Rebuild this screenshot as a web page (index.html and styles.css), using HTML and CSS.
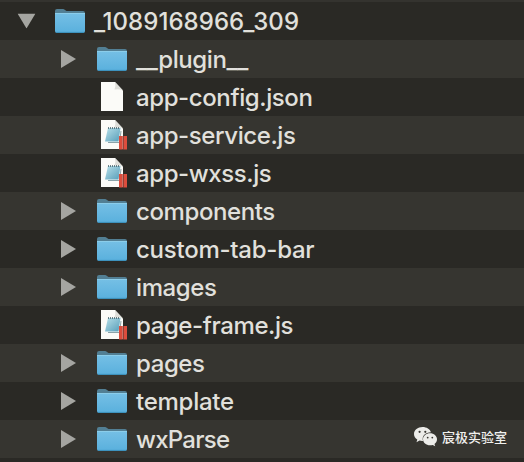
FILE: index.html
```html
<!DOCTYPE html>
<html lang="en">
<head>
<meta charset="utf-8">
<title>_1089168966_309</title>
<link rel="stylesheet" href="styles.css">
</head>
<body>
<svg class="defs" width="0" height="0" aria-hidden="true">
  <defs>
    <linearGradient id="front" x1="0" y1="0" x2="0" y2="1">
      <stop offset="0" stop-color="#75bfe5"/>
      <stop offset="1" stop-color="#59b0dd"/>
    </linearGradient>
    <linearGradient id="pad" x1="0" y1="0" x2="1" y2="1">
      <stop offset="0" stop-color="#b9e0e9"/>
      <stop offset="1" stop-color="#559db9"/>
    </linearGradient>
    <symbol id="folder" viewBox="0 0 30 24">
      <path d="M0 6V2Q0 0 2 0H8Q9 0 10 1L11.5 2H28Q30 2 30 4V6Z" fill="#527f94"/>
      <path d="M0 4.5H30V22Q30 24 28 24H2Q0 24 0 22Z" fill="url(#front)"/>
      <path d="M0 4.5H30" stroke="#8bcdea" stroke-width="1"/>
      <path d="M1 23.4H29" stroke="#3b8eb9" stroke-width="1"/>
    </symbol>
    <symbol id="page" viewBox="0 0 28 30">
      <path d="M0 0H14L22 8.500V29H0Z" fill="#fbfbf8"/>
      <path d="M14 0L22 8.500Q18 6.500 13.500 7.500Q15 4 14 0Z" fill="#deded9"/>
    </symbol>
    <symbol id="script" viewBox="0 0 28 30">
      <use href="#page" width="28" height="30"/>
      <path d="M7 8H19.500L17.500 21.500H4Z" fill="url(#pad)"/>
      <path d="M7 22.500H18.500L20 11" fill="none" stroke="#8ba3a9" stroke-width="1"/>
      <path d="M7 8H19" stroke="#455d65" stroke-width="1.500" stroke-dasharray="1 1"/>
      <path d="M18 16H21.500V29.500H18ZM22.500 16H26V29.500H22.500Z" fill="#dc4d3d"/>
      <path d="M22 16V29.500" stroke="#a5443a" stroke-width="1"/>
    </symbol>
    <symbol id="arrow" viewBox="0 0 15 18">
      <path d="M0 0L15 9L0 18Z" fill="#a5a5a1"/>
    </symbol>
  </defs>
</svg>
<main class="tree">
  <div class="row root"><svg class="arrow open"><use href="#arrow"/></svg><svg class="folder"><use href="#folder"/></svg><span class="name digits">_1089168966_309</span></div>
  <div class="row"><svg class="arrow"><use href="#arrow"/></svg><svg class="folder"><use href="#folder"/></svg><span class="name">__plugin__</span></div>
  <div class="row"><svg class="file"><use href="#page"/></svg><span class="name">app-config.json</span></div>
  <div class="row"><svg class="file"><use href="#script"/></svg><span class="name">app-service.js</span></div>
  <div class="row"><svg class="file"><use href="#script"/></svg><span class="name">app-wxss.js</span></div>
  <div class="row"><svg class="arrow"><use href="#arrow"/></svg><svg class="folder"><use href="#folder"/></svg><span class="name">components</span></div>
  <div class="row"><svg class="arrow"><use href="#arrow"/></svg><svg class="folder"><use href="#folder"/></svg><span class="name loose">custom-tab-bar</span></div>
  <div class="row"><svg class="arrow"><use href="#arrow"/></svg><svg class="folder"><use href="#folder"/></svg><span class="name">images</span></div>
  <div class="row"><svg class="file"><use href="#script"/></svg><span class="name">page-frame.js</span></div>
  <div class="row"><svg class="arrow"><use href="#arrow"/></svg><svg class="folder"><use href="#folder"/></svg><span class="name">pages</span></div>
  <div class="row"><svg class="arrow"><use href="#arrow"/></svg><svg class="folder"><use href="#folder"/></svg><span class="name loose">template</span></div>
  <div class="row"><svg class="arrow"><use href="#arrow"/></svg><svg class="folder"><use href="#folder"/></svg><span class="name tight">wxParse</span></div>
</main>
<div class="watermark">
  <svg class="wechat" viewBox="0 0 23 20">
    <path d="M8.500 0C3.800 0 0 3 0 7C0 9.400 1.300 11.400 3.300 12.600L2.500 15.200L5.500 13.600Q7 14 9 13.900C7.500 9 11.500 5.200 16.900 5.200C16 2.100 12.700 0 8.500 0Z" fill="#ecece9"/>
    <path d="M16 6.200C12.100 6.200 9 8.900 9 12.300S12.100 18.300 16 18.300Q17.500 18.300 18.700 17.900L21.200 19.300L20.500 17C22 15.900 23 14.200 23 12.300C23 8.900 19.900 6.200 16 6.200Z" fill="#ecece9"/>
    <g fill="#383733"><circle cx="5.600" cy="4.800" r="1.100"/><circle cx="11.300" cy="4.800" r="1.100"/><circle cx="13.700" cy="10.600" r=".9"/><circle cx="18.300" cy="10.600" r=".9"/></g>
  </svg>
  <span>宸极实验室</span>
</div>
</body>
</html>
```
FILE: styles.css
```css
body {
  margin: 0;
  width: 524px;
  height: 462px;
  overflow: hidden;
  background: #2a2925;
  color: #e1e0dc;
  font-family: Inter, "Liberation Sans", sans-serif;
}
.defs { position: absolute; }
.tree { border-top: 2px solid #34332f; }
.row {
  display: flex;
  align-items: center;
  box-sizing: border-box;
  height: 38px;
  padding-left: 61px;
  background: #2a2925;
}
.row:nth-child(even) { background: #363530; }
.row.root { padding-left: 19px; }
.arrow { width: 15px; height: 18px; margin-right: 21px; }
.arrow.open { transform: rotate(90deg); }
.folder { width: 30px; height: 24px; margin-right: 9px; }
.file { width: 28px; height: 30px; margin: 0 7px 0 40px; }
.name {
  padding-top: 2px;
  font-size: 24px;
  line-height: 36px;
  font-weight: 500;
  letter-spacing: -.4px;
  white-space: nowrap;
}
.name.digits { letter-spacing: .05px; }
.name.loose { letter-spacing: -.25px; }
.name.tight { letter-spacing: -.75px; }
.watermark {
  position: absolute;
  left: 414px;
  top: 427px;
  display: flex;
  align-items: center;
  gap: 5px;
  color: #f0f0ed;
  font: 500 13px/20px "Noto Sans CJK SC", sans-serif;
  white-space: nowrap;
}
.wechat { width: 23px; height: 20px; }
```
